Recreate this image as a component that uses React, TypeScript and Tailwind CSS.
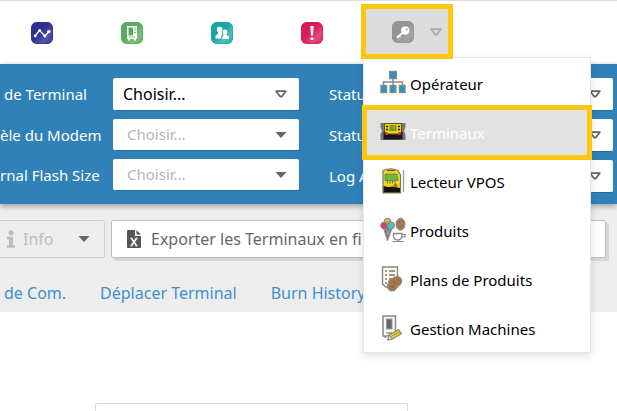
import React from 'react'

type IconProps = { className?: string }

// Rounded tile used by every icon of the top bar
const Tile: React.FC<{ color: string; shade: string; id: string; children: React.ReactNode }> = ({ color, shade, id, children }) => (
  <svg viewBox="0 0 22 22" className="block h-[22px] w-[22px]" aria-hidden="true">
    <defs>
      <linearGradient id={id} x1="0.3" y1="0.3" x2="1" y2="1">
        <stop offset="0.2" stopColor={color} />
        <stop offset="0.6" stopColor={shade} />
        <stop offset="1" stopColor={color} />
      </linearGradient>
    </defs>
    <rect width="22" height="22" rx="6" fill={`url(#${id})`} />
    <rect x="0.5" y="0.5" width="21" height="21" rx="5.500" fill="none" stroke={color} opacity="0.7" />
    {children}
  </svg>
)

const ChartTile = () => (
  <Tile id="tile-chart" color="#2e3192" shade="#5052a5">
    <path d="M4 14L8.500 8.500L14 14L18 9.500" fill="none" stroke="#fff" strokeWidth="1.300" />
    <g fill="#fff">
      <circle cx="4.200" cy="13.800" r="1.500" />
      <circle cx="8.600" cy="8.600" r="1.500" />
      <circle cx="13.800" cy="14" r="1.500" />
      <circle cx="17.800" cy="9.600" r="1.700" />
    </g>
  </Tile>
)

const MachineTile = () => (
  <Tile id="tile-machine" color="#59aa5d" shade="#7dbe81">
    <path d="M6 4H16V17H15V18.500H13V17H9V18.500H7V17H6Z" fill="#fff" />
    <path d="M7.500 5.500H12V13.500H7.500Z" fill="#59aa5d" />
    <path d="M13.200 6H14.800M13.200 8H14.800M13.200 10.500H14.800" stroke="#59aa5d" />
    <path d="M8 15H14" stroke="#59aa5d" strokeWidth="0.800" />
  </Tile>
)

const UsersTile = () => (
  <Tile id="tile-users" color="#19a5a5" shade="#52bcbc">
    <g fill="#fff">
      <circle cx="8.700" cy="7.600" r="2.900" />
      <path d="M7 9H10.500L11.500 12.500L10 16.500H4.500V14.500C4.500 13 7 12.500 7 11.500Z" />
      <circle cx="13.800" cy="10" r="2.500" />
      <path d="M12.500 11H15.400V13C16 14 18 14 18 15.500V17H11V15.500C11 14.200 12.500 14 12.500 13Z" />
    </g>
    <path d="M11.600 8.500C11 11 12.200 12.500 10.600 14.200V17" fill="none" stroke="#19a5a5" strokeWidth="0.800" />
  </Tile>
)

const AlertTile = () => (
  <Tile id="tile-alert" color="#da1a5b" shade="#e24a7a">
    <path d="M9.200 4H12.800L12 13.500H10Z" fill="#fff" />
    <rect x="9.500" y="15.500" width="3" height="2.500" rx="0.800" fill="#fff" />
  </Tile>
)

const KeyTile = () => (
  <Tile id="tile-key" color="#939496" shade="#a3a4a6">
    <circle cx="13.300" cy="9.500" r="4.200" fill="#fff" />
    <path d="M11 11.500L5 16.500" stroke="#fff" strokeWidth="1.800" />
    <path d="M7 14.500L8.500 16.500M5 15.500L6.500 17.500" stroke="#fff" strokeWidth="1.200" />
    <circle cx="14.800" cy="8.500" r="0.900" fill="#939496" />
  </Tile>
)

const CaretOutline: React.FC<IconProps> = ({ className }) => (
  <svg viewBox="0 0 12 8" className={`h-2 w-3 ${className}`} aria-hidden="true">
    <path d="M1.200 1.200H10.800L7 6.200Q6 7 5 6.200Z" fill="none" stroke="currentColor" strokeWidth="1.800" strokeLinejoin="round" />
  </svg>
)

const CaretSolid: React.FC<IconProps> = ({ className }) => (
  <svg viewBox="0 0 12 8" className={`h-2 w-3 ${className}`} aria-hidden="true">
    <path d="M0.500 1H11.500L6.500 6.600Q6 7 5.500 6.600Z" fill="currentColor" />
  </svg>
)

const OperatorIcon = () => (
  <svg viewBox="0 0 26 26" className="h-[26px] w-[26px] shrink-0" aria-hidden="true">
    <path d="M13 8V14M3.500 17V12H22.500V17M13 12V17" fill="none" stroke="#888" strokeWidth="1.500" />
    <g fill="#1b9bd3" stroke="#8a8480" strokeWidth="1.400">
      <rect x="9.700" y="1.500" width="6.600" height="7" />
      <rect x="1" y="15.500" width="5.500" height="7" />
      <rect x="10.200" y="15.500" width="5.600" height="7" />
      <rect x="19.500" y="15.500" width="5.500" height="7" />
    </g>
  </svg>
)

const TerminalIcon = () => (
  <svg viewBox="0 0 26 26" className="h-[26px] w-[26px] shrink-0" aria-hidden="true">
    <path d="M0.500 4H25.500V8L24 12L25.500 15V21H0.500V15L2 12L0.500 8Z" fill="#777" />
    <path d="M3.500 13H22.500V20.500H3.500Z" fill="#171612" />
    <path d="M4.500 4.500H21.500V13L19 15H7L4.500 13Z" fill="#f2cf13" stroke="#5a5018" />
    <rect x="10" y="6.500" width="6" height="5" fill="#65a944" stroke="#8d8438" />
    <path d="M6 7.500H8M6 10.500H8M18 7.500H20M18 10.500H20" stroke="#222" strokeWidth="1.500" />
    <circle cx="6.500" cy="14.500" r="1.600" fill="#e4324a" />
    <circle cx="19.500" cy="14.500" r="1.600" fill="#e4324a" />
  </svg>
)

const VposIcon = () => (
  <svg viewBox="0 0 26 26" className="h-[26px] w-[26px] shrink-0" aria-hidden="true">
    <path d="M3 2.500Q11 -1 18 2.500L20.500 7V25H3Z" fill="#f3d51b" stroke="#777" strokeWidth="1.200" />
    <path d="M3.500 18Q8 19.500 13 18.500L20 20V24.500H3.500Z" fill="#14130e" />
    <path d="M7 2.500H15" stroke="#555" strokeWidth="1.200" />
    <path d="M5 6H17L18 12.500H5Z" fill="#68b547" stroke="#7c8228" strokeWidth="0.800" />
    <path d="M7.500 13V15.500M10 13V15.500M12.500 13V15.500M15 13V15.500" stroke="#777" strokeWidth="1.200" />
    <circle cx="15.500" cy="17.500" r="2" fill="#9c8529" />
    <path d="M23.500 2V24" stroke="#999" strokeWidth="1.300" />
  </svg>
)

const ProductsIcon = () => (
  <svg viewBox="0 0 26 26" className="h-[26px] w-[26px] shrink-0" aria-hidden="true">
    <path d="M3 10L7.500 24L12.500 10Z" fill="#777" stroke="#999" />
    <path d="M6 12L9 18M10 12L7 18" stroke="#bbb" strokeWidth="0.700" />
    <circle cx="7.500" cy="4.500" r="3.300" fill="#e7b039" stroke="#888" />
    <circle cx="4" cy="8.500" r="3.300" fill="#e43e66" stroke="#888" />
    <circle cx="10.800" cy="8.500" r="3.700" fill="#4bc1b2" stroke="#888" />
    <ellipse cx="20.500" cy="7.200" rx="4.500" ry="6" fill="#a97951" stroke="#888" />
    <path d="M18 5H20M21 8.500H23M19 10.500H20.500M21.500 4H22.500" stroke="#767069" strokeWidth="1.500" />
    <path d="M13.500 16.500H22V19Q21 23 18 23Q14 23 13.500 19Z" fill="#fff" stroke="#888" strokeWidth="1.300" />
    <path d="M22 17.500H25V20H22M12.500 24.500H23.500" fill="none" stroke="#888" strokeWidth="1.200" />
  </svg>
)

const PlansIcon = () => (
  <svg viewBox="0 0 26 26" className="h-[26px] w-[26px] shrink-0" aria-hidden="true">
    <path d="M2.500 1H17.500V21H5.500L2.500 18Z" fill="#fff6e7" stroke="#888" strokeWidth="1.400" />
    <path d="M5 5H7M5 9H7M5 13H7M5 17H7" stroke="#777" strokeWidth="1.600" />
    <path d="M9 5H15M9 9H15M9 13H12" stroke="#777" strokeWidth="1.300" />
    <path d="M9 17Q8 13 12 13Q16 9 20 11.500Q23 15 20.500 18Q18.500 20 17 20.500Q15.500 25 12 25Q8.500 24.500 7.500 21Q7.500 18 9 17Z" fill="#a97745" stroke="#888" strokeWidth="1.200" />
    <path d="M13 16H15M18 14H19M11 21H14M17 18H18" stroke="#756a60" strokeWidth="1.600" />
  </svg>
)

const MachinesIcon = () => (
  <svg viewBox="0 0 26 26" className="h-[26px] w-[26px] shrink-0" aria-hidden="true">
    <path d="M3 1H15.500V21H3Z" fill="#f6f6f6" stroke="#888" strokeWidth="1.500" />
    <rect x="6.500" y="4" width="5.500" height="10" fill="#666" stroke="#999" />
    <path d="M5 21V23M13 21V22M6.500 18H12" stroke="#888" strokeWidth="1.400" />
    <path d="M9 20L18.500 14.500L21.500 18.500L12.500 24L8 25Z" fill="#e2cf25" stroke="#888" strokeWidth="1.200" />
    <path d="M9 20L12.500 24L8 25Z" fill="#ddd" stroke="#888" />
    <path d="M11 21.500L20 16.500" stroke="#a39420" />
  </svg>
)

const InfoIcon = () => (
  <svg viewBox="0 0 8 18" className="h-[18px] w-2" aria-hidden="true">
    <circle cx="4" cy="2.800" r="2.600" fill="currentColor" />
    <path d="M0 6.800H6V15H8V17.800H0V15H2V9.500H0Z" fill="currentColor" />
  </svg>
)

const ExcelFileIcon = () => (
  <svg viewBox="0 0 14 18" className="h-[18px] w-[14px] shrink-0 text-[#555]" aria-hidden="true">
    <path d="M1 0H8V6H14V17Q14 18 13 18H1Q0 18 0 17V1Q0 0 1 0ZM9.500 0L14 4.600H9.500Z" fill="currentColor" />
    <path d="M4.500 8.500L9.500 15.500M9.500 8.500L4.500 15.500" stroke="#fff" strokeWidth="1.600" />
    <path d="M3.200 8.200H5.500M8.500 8.200H10.800M3.200 15.800H5.500M8.500 15.800H10.800" stroke="#fff" strokeWidth="0.900" />
  </svg>
)

type FieldProps = { id: string; label: string; active?: boolean; indent?: boolean }

const LeftField: React.FC<FieldProps> = ({ id, label, active, indent }) => (
  <div className="flex items-center">
    <label htmlFor={id} className={`w-[113px] shrink-0 whitespace-nowrap text-white ${indent ? 'pl-1' : ''}`}>
      {label}
    </label>
    <div className="relative w-[186px]">
      <select
        id={id}
        className={`block w-full appearance-none rounded-xs border-b border-[#266b9b] bg-white ${active ? 'h-[33px] px-2.5 text-base text-black' : 'h-8 px-3.5 text-[15px] text-[#b5b5b5]'}`}
      >
        <option>Choisir...</option>
      </select>
      {active ? (
        <CaretOutline className="pointer-events-none absolute top-3 right-3 text-[#666]" />
      ) : (
        <CaretSolid className="pointer-events-none absolute top-3 right-3 text-[#666]" />
      )}
    </div>
  </div>
)

const RightField: React.FC<FieldProps> = ({ id, label }) => (
  <div className="flex items-center">
    <label htmlFor={id} className="w-[113px] shrink-0 whitespace-nowrap text-white">
      {label}
    </label>
    <div className="relative flex-1">
      <select id={id} className="block h-[33px] w-full appearance-none rounded-xs border-b border-[#266b9b] bg-white" />
      <CaretOutline className="pointer-events-none absolute top-3 right-3 text-[#666]" />
    </div>
  </div>
)

const menuItems = [
  { name: 'Opérateur', icon: <OperatorIcon /> },
  { name: 'Terminaux', icon: <TerminalIcon />, selected: true },
  { name: 'Lecteur VPOS', icon: <VposIcon /> },
  { name: 'Produits', icon: <ProductsIcon /> },
  { name: 'Plans de Produits', icon: <PlansIcon /> },
  { name: 'Gestion Machines', icon: <MachinesIcon /> },
]

const shortcuts = [
  { name: 'Statistiques', icon: <ChartTile /> },
  { name: 'Machines', icon: <MachineTile /> },
  { name: 'Utilisateurs', icon: <UsersTile /> },
  { name: 'Alertes', icon: <AlertTile /> },
]

const AdminMenu = () => (
  <div className="absolute top-[53px] left-0.5 z-20 w-[228px] border border-[#e6e6e6] bg-white shadow-[0_3px_8px_rgba(0,0,0,0.12)]">
    {menuItems.map((item) => (
      <a
        key={item.name}
        href="#"
        className={`relative flex h-[49px] items-center gap-1 pl-4 text-[15px] ${item.selected ? 'bg-[#e2e2e2] text-white' : 'text-black'}`}
      >
        {item.icon}
        <span className="pt-1">{item.name}</span>
        {item.selected && <span className="absolute -top-0.5 -right-0.5 -bottom-1 -left-0.5 border-5 border-[#ffc60f]" />}
      </a>
    ))}
  </div>
)

const App: React.FC = () => {
  return (
    <div className="min-h-screen overflow-hidden bg-white font-['Noto_Sans','Open_Sans',sans-serif] text-[15px]">
      {/* Top bar */}
      <header className="flex h-16 border-t border-[#dedede] pl-[31px]">
        <div className="flex items-center gap-[68px]">
          {shortcuts.map((item) => (
            <button key={item.name} aria-label={item.name}>
              {item.icon}
            </button>
          ))}
        </div>
        <div className="relative mt-[3px] ml-[38px] h-[55px]">
          <button
            aria-label="Administration"
            className="relative z-30 flex h-[55px] w-[92px] items-center justify-end gap-4 border-5 border-[#ffc60f] bg-[#dcdcdc] pr-1.5"
          >
            <KeyTile />
            <CaretOutline className="text-[#aaa]" />
          </button>
          <AdminMenu />
        </div>
      </header>

      {/* Filters */}
      <section className="relative z-10 flex h-[140px] gap-[30px] bg-[#3081b8] pt-3.5 pr-1 shadow-[0_2px_6px_rgba(0,0,0,0.35)]">
        <div className="flex flex-col gap-2">
          <LeftField id="terminal" label="de Terminal" active indent />
          <LeftField id="modem" label="èle du Modem" />
          <LeftField id="flash" label="rnal Flash Size" />
        </div>
        <div className="flex flex-1 flex-col gap-2">
          <RightField id="status-a" label="Statu" />
          <RightField id="status-b" label="Statu" />
          <RightField id="log" label="Log A" />
        </div>
      </section>

      {/* Actions */}
      <section className="h-[108px] bg-[#ededed] pt-4">
        <div className="flex gap-1.5 pr-[11px]">
          <button className="flex h-[38px] w-[105px] items-center rounded-r-xs border border-l-0 border-[#d2d2d2] pl-[7px] text-base text-[#bdbdbd]">
            <InfoIcon />
            <span className="ml-2">Info</span>
            <CaretSolid className="mr-3.5 ml-auto text-[#666]" />
          </button>
          <button className="flex h-[38px] flex-1 items-center gap-2.5 rounded-xs border border-[#bdbdbd] bg-white pl-[15px] text-base whitespace-nowrap text-[#666] shadow-[3px_3px_0_#cfdbcf]">
            <ExcelFileIcon />
            Exporter les Terminaux en fi
          </button>
        </div>
        <nav className="mt-[23px] flex gap-[34px] pl-1 text-base leading-6 whitespace-nowrap text-[#418fcf]">
          <a href="#">de Com.</a>
          <a href="#">Déplacer Terminal</a>
          <a href="#">Burn History</a>
        </nav>
      </section>

      <main className="pt-[91px] pl-[95px]">
        <div className="h-2 w-[313px] rounded-t-xs border border-b-0 border-[#d8d8d8]" />
      </main>
    </div>
  )
}

export default App
